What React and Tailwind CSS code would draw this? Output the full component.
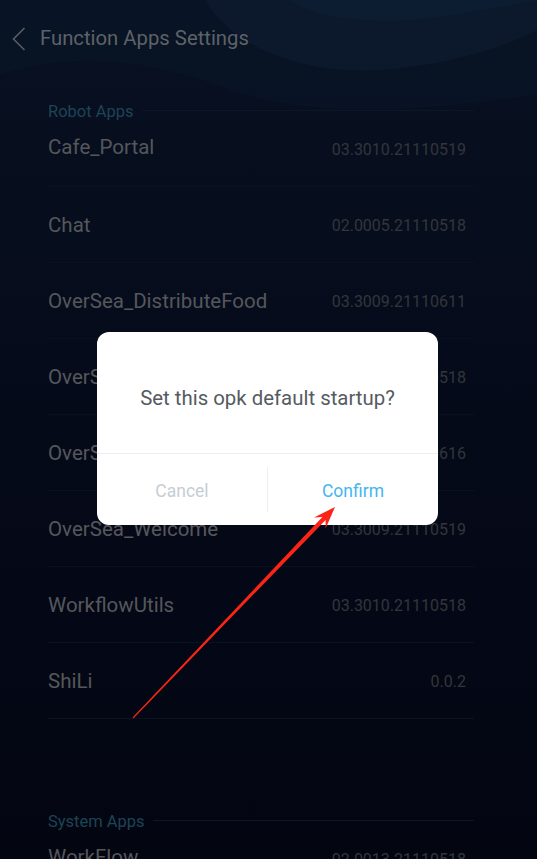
const robotApps = [
    { name: "Cafe_Portal", version: "03.3010.21110519" },
    { name: "Chat", version: "02.0005.21110518" },
    { name: "OverSea_DistributeFood", version: "03.3009.21110611" },
    { name: "OverSea_Guide", version: "03.3010.21110518" },
    { name: "OverSea_Reception", version: "03.3009.21110616" },
    { name: "OverSea_Welcome", version: "03.3009.21110519" },
    { name: "WorkflowUtils", version: "03.3010.21110518" },
    { name: "ShiLi", version: "0.0.2" },
];

function SectionLabel({ title }) {
    return (
        <div className="flex items-center h-[24px] gap-2">
            <span className="text-[16.5px] text-[#1d4457] leading-none whitespace-nowrap">{title}</span>
            <div className="flex-1 h-px bg-[#0d1825] -mt-[4px]"></div>
        </div>
    );
}

function AppRow({ app, first }) {
    return (
        <div className={first
            ? "flex items-start justify-between h-[62px] pt-[9px] pr-2"
            : "flex items-center justify-between h-[76px] border-t border-[#0b111e] pr-2"}>
            <span className="text-[20.5px] leading-[28px] text-[#55575b]">{app.name}</span>
            <span className="text-[16px] leading-[28px] text-[#33363b] mt-[3px]">{app.version}</span>
        </div>
    );
}

export default function App() {
    return (
        <div className="relative w-[537px] h-[859px] overflow-hidden bg-gradient-to-b from-[#081122] via-[#050a19] to-[#030511]" style={{ fontFamily: "Roboto, 'Liberation Sans', sans-serif" }}>
            {/* background waves */}
            <svg className="absolute inset-0" width="537" height="300" viewBox="0 0 537 300">
                <path d="M0 75 C 80 50, 150 60, 230 90 C 320 120, 420 110, 537 95 L 537 0 L 0 0 Z" fill="#0a1628" opacity="0.55" />
                <path d="M205 0 C 230 45, 300 75, 380 70 C 440 66, 500 50, 537 30 L 537 0 Z" fill="#0e1c31" opacity="0.7" />
                <path d="M290 0 C 320 20, 380 25, 430 18 C 470 12, 510 5, 537 0 Z" fill="#0f2034" opacity="0.6" />
            </svg>

            <div className="relative">
                {/* header */}
                <div className="flex items-center h-[78px] pl-[12px] pb-[1px]">
                    <svg width="14" height="24" viewBox="0 0 14 24" className="shrink-0">
                        <polyline points="12.5,1 1.5,12 12.5,23" fill="none" stroke="#595d63" strokeWidth="1.6" />
                    </svg>
                    <span className="ml-[14px] text-[20.3px] text-[#5e6268]">Function Apps Settings</span>
                </div>

                <div className="pl-[48px] pr-[63px] pt-[22px]">
                    <SectionLabel title="Robot Apps" />
                    {robotApps.map((app, i) => (
                        <AppRow key={app.name} app={app} first={i === 0} />
                    ))}
                    <div className="border-t border-[#0b111e] h-[92px]"></div>
                    <SectionLabel title="System Apps" />
                    <AppRow app={{ name: "WorkFlow", version: "02.0013.21110518" }} first />
                </div>
            </div>

            {/* dialog */}
            <div className="absolute left-[97px] top-[332px] w-[341px] h-[193px] bg-white rounded-[12px] flex flex-col">
                <div className="h-[122px] flex items-center justify-center pt-[12px] border-b border-[#eeeeee]">
                    <span className="text-[20.4px] text-[#555b60]">Set this opk default startup?</span>
                </div>
                <div className="flex-1 flex items-center">
                    <div className="flex-1 text-center text-[17.5px] text-[#c6cdd3] pt-[3px]">Cancel</div>
                    <div className="w-px h-[45px] bg-[#eeeeee]"></div>
                    <div className="flex-1 text-center text-[17.5px] text-[#45b6f1] pt-[3px]">Confirm</div>
                </div>
            </div>

            {/* annotation arrow */}
            <svg className="absolute inset-0 pointer-events-none" width="537" height="859" viewBox="0 0 537 859">
                <polygon
                    points="132.6,717.6 322.4,517.0 314.0,517.4 335,507 325.6,528.4 325.6,520.0 133.4,718.4"
                    fill="#fb2416"
                />
            </svg>
        </div>
    );
}
